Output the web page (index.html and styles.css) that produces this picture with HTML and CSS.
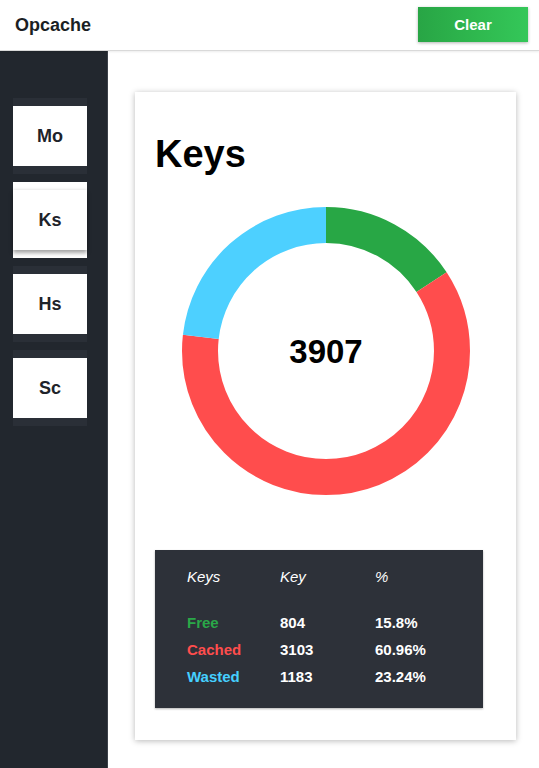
FILE: index.html
```html
<!DOCTYPE html>
<html>
<head>
<meta charset="utf-8">
<title>Opcache</title>
<link rel="stylesheet" href="styles.css">
</head>
<body>
<header class="topbar">
  <div class="brand">Opcache</div>
  <button class="btn-clear">Clear</button>
</header>
<div class="layout">
  <aside class="sidebar">
    <nav class="nav">
      <div class="nav-item"><div class="nav-box">Mo</div></div>
      <div class="nav-item active"><div class="nav-box">Ks</div></div>
      <div class="nav-item"><div class="nav-box">Hs</div></div>
      <div class="nav-item"><div class="nav-box">Sc</div></div>
    </nav>
  </aside>
  <main class="main">
    <section class="card">
      <h1 class="card-title">Keys</h1>
      <div class="chart">
        <svg class="donut" width="288" height="288" viewBox="0 0 288 288">
          <g transform="rotate(-90 144 144)">
            <circle cx="144" cy="144" r="126" fill="none" stroke="#28a745" stroke-width="36" stroke-dasharray="125.09 791.68" stroke-dashoffset="0"/>
            <circle cx="144" cy="144" r="126" fill="none" stroke="#ff4d4d" stroke-width="36" stroke-dasharray="482.61 791.68" stroke-dashoffset="-125.09"/>
            <circle cx="144" cy="144" r="126" fill="none" stroke="#4dd0ff" stroke-width="36" stroke-dasharray="183.98 791.68" stroke-dashoffset="-607.70"/>
          </g>
          <text x="144" y="155.5" text-anchor="middle" class="donut-total">3907</text>
        </svg>
      </div>
      <div class="stats">
        <div class="stats-head">
          <span>Keys</span><span>Key</span><span>%</span>
        </div>
        <div class="stats-body">
          <span class="c-free">Free</span><span>804</span><span>15.8%</span>
          <span class="c-cached">Cached</span><span>3103</span><span>60.96%</span>
          <span class="c-wasted">Wasted</span><span>1183</span><span>23.24%</span>
        </div>
      </div>
    </section>
  </main>
</div>
</body>
</html>
```

FILE: styles.css
```css
* { box-sizing: border-box; }

html, body {
  margin: 0;
  padding: 0;
  background: #ffffff;
  font-family: "Liberation Sans", Arial, sans-serif;
}

.topbar {
  height: 51px;
  display: flex;
  align-items: center;
  justify-content: space-between;
  padding: 0 11px 0 15px;
  border-bottom: 1px solid #d9d9d9;
  box-shadow: 0 1px 2px rgba(0, 0, 0, 0.08);
  position: relative;
  z-index: 1;
}

.brand {
  font-size: 18px;
  font-weight: bold;
  color: #1b1f24;
}

.btn-clear {
  width: 110px;
  height: 35px;
  border: none;
  margin-top: -1px;
  background: linear-gradient(90deg, #28a545 0%, #2fb94f 55%, #34c759 100%);
  color: #ffffff;
  font-family: "Liberation Sans", Arial, sans-serif;
  font-size: 15px;
  font-weight: bold;
  box-shadow: 0 1px 3px rgba(0, 0, 0, 0.3);
  padding: 0;
}

.layout {
  display: flex;
  min-height: 717px;
}

.sidebar {
  width: 108px;
  flex: 0 0 108px;
  background: #22272e;
  border-right: 1px solid #3c4149;
  padding: 47px 0 0 13px;
}

.nav {
  display: flex;
  flex-direction: column;
  gap: 8px;
  width: 74px;
}

.nav-item {
  background: #2a2f37;
  padding: 8px 0;
}

.nav-box {
  height: 60px;
  background: #ffffff;
  display: flex;
  align-items: center;
  justify-content: center;
  font-size: 18px;
  font-weight: bold;
  color: #1e232a;
}

.nav-item.active {
  background: #ffffff;
}

.nav-item.active .nav-box {
  box-shadow: 0 3px 4px rgba(0, 0, 0, 0.35), 0 -1px 3px rgba(0, 0, 0, 0.08);
}

.main {
  flex: 1;
  padding: 41px 0 0 27px;
}

.card {
  width: 381px;
  background: #ffffff;
  padding: 20px 20px 32px 20px;
  box-shadow: 0 1px 6px rgba(0, 0, 0, 0.28);
}

.card-title {
  margin: 20px 0 0 0;
  font-size: 38px;
  font-weight: bold;
  color: #000000;
  line-height: 44px;
}

.chart {
  display: flex;
  justify-content: center;
  margin-top: 31px;
  margin-bottom: 55px;
}

.donut {
  display: block;
}

.donut-total {
  font-family: "Liberation Sans", Arial, sans-serif;
  font-size: 33px;
  font-weight: bold;
  fill: #000000;
}

.stats {
  width: 328px;
  background: #2d3139;
  padding: 18px 32px;
  color: #ffffff;
  font-size: 15px;
  box-shadow: 0 1px 2px rgba(0, 0, 0, 0.3);
}

.stats-head,
.stats-body {
  display: grid;
  grid-template-columns: 93px 95px 1fr;
}

.stats-head {
  font-style: italic;
  line-height: 17px;
  margin-bottom: 24px;
}

.stats-body {
  font-weight: bold;
  line-height: 27px;
}

.c-free { color: #2aa748; }
.c-cached { color: #ff4d4d; }
.c-wasted { color: #45cfff; }
```
